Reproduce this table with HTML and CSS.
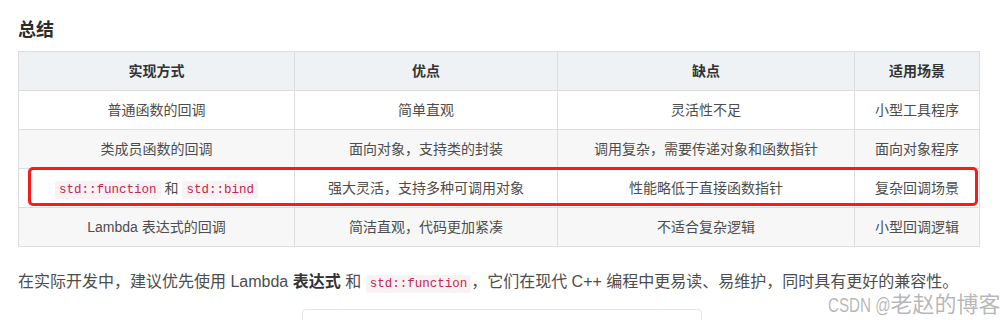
FILE: index.html
```html
<!DOCTYPE html>
<html lang="zh">
<head>
<meta charset="utf-8">
<link rel="stylesheet" href="styles.css">
</head>
<body>
<div class="article">
  <h2 class="title">总结</h2>
  <div class="table-wrap">
    <table class="summary">
      <thead>
        <tr><th class="c1">实现方式</th><th class="c2">优点</th><th class="c3">缺点</th><th class="c4">适用场景</th></tr>
      </thead>
      <tbody>
        <tr><td>普通函数的回调</td><td>简单直观</td><td>灵活性不足</td><td>小型工具程序</td></tr>
        <tr class="alt"><td>类成员函数的回调</td><td>面向对象，支持类的封装</td><td>调用复杂，需要传递对象和函数指针</td><td>面向对象程序</td></tr>
        <tr><td><code>std::function</code> 和 <code>std::bind</code></td><td>强大灵活，支持多种可调用对象</td><td>性能略低于直接函数指针</td><td>复杂回调场景</td></tr>
        <tr class="alt"><td>Lambda 表达式的回调</td><td>简洁直观，代码更加紧凑</td><td>不适合复杂逻辑</td><td>小型回调逻辑</td></tr>
      </tbody>
    </table>
    <div class="highlight-box"></div>
  </div>
  <p class="text">在实际开发中，建议优先使用 Lambda <strong>表达式</strong> 和 <code>std::function</code>，它们在现代 C++ 编程中更易读、易维护，同时具有更好的兼容性。</p>
  <div class="figure"></div>
</div>
<div class="watermark"><span class="wm-latin">CSDN @</span><span class="wm-cjk">老赵的博客</span></div>
</body>
</html>
```

FILE: styles.css
```css
html, body {
  margin: 0;
  padding: 0;
  background: #ffffff;
  overflow: hidden;
}
body {
  width: 1003px;
  height: 320px;
  position: relative;
  font-family: "Liberation Sans", "Noto Sans CJK SC", sans-serif;
  color: #4d4d4d;
}
.article {
  padding: 0 18px 0 18px;
}
.title {
  margin: 0;
  padding-top: 17px;
  font-size: 18px;
  line-height: 26px;
  font-weight: bold;
  color: #2c2c2c;
  height: 34px;
}
.table-wrap {
  position: relative;
  width: 962px;
}
.summary {
  border-collapse: collapse;
  width: 962px;
  table-layout: fixed;
  font-size: 14px;
}
.summary th, .summary td {
  border: 1px solid #dddddd;
  text-align: center;
  padding: 8px 6px;
  line-height: 22px;
  height: 22px;
}
.summary th {
  background: #eff2f5;
  color: #333333;
  font-weight: bold;
}
.summary td {
  color: #4d4d4d;
}
.summary tr.alt td {
  background: #f7f7f7;
}
.c1 { width: 263px; }
.c2 { width: 250px; }
.c3 { width: 284px; }
.c4 { width: 112px; }
code {
  font-family: "Liberation Mono", "DejaVu Sans Mono", monospace;
  font-size: 12.5px;
  line-height: 16px;
  color: #c7254e;
  background: #f9f2f4;
  padding: 2px 4px;
  border-radius: 3px;
}
.highlight-box {
  position: absolute;
  left: 10px;
  top: 116px;
  width: 944px;
  height: 33px;
  border: 3px solid #f51c1c;
  border-radius: 5px;
  pointer-events: none;
}
.text {
  margin: 22px 0 0 0;
  font-size: 16px;
  line-height: 26px;
  color: #4d4d4d;
}
.text strong {
  color: #333333;
}
.figure {
  margin: 14px auto 0 auto;
  width: 398px;
  height: 40px;
  border: 1px solid #e6e6e6;
  border-radius: 4px 4px 0 0;
}
.watermark {
  position: absolute;
  left: 828px;
  top: 288px;
  display: flex;
  align-items: baseline;
  line-height: 28px;
  color: rgba(135, 135, 135, 0.6);
  white-space: nowrap;
}
.wm-latin {
  display: inline-block;
  font-family: "Liberation Sans", sans-serif;
  font-size: 20px;
  transform: scaleX(0.76);
  transform-origin: left center;
  margin-right: -20px;
}
.wm-cjk {
  font-family: "Noto Sans CJK SC", sans-serif;
  font-size: 22px;
  letter-spacing: 0;
}
```
